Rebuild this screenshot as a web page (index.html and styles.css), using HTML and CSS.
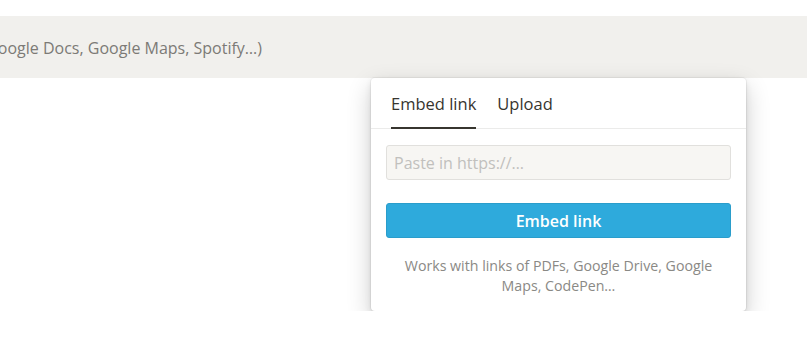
FILE: index.html
```html
<!DOCTYPE html>
<html lang="en">
<head>
  <meta charset="UTF-8" />
  <title>Embed block</title>
  <link rel="stylesheet" href="styles.css">
</head>
<body>

  <!-- bloc embed vide -->
  <div class="embed-block">
    <div class="embed-label">
      <span>Embed anything (Google Docs, Google Maps, Spotify…)</span>
    </div>
  </div>

  <!-- menu embed -->
  <div class="popup">
    <div class="tabs">
      <div class="tab active">Embed link</div>
      <div class="tab">Upload</div>
    </div>
    <div class="popup-body">
      <input class="url-input" type="text" placeholder="Paste in https://…">
      <button class="embed-btn">Embed link</button>
      <p class="hint">Works with links of PDFs, Google Drive, Google Maps, CodePen…</p>
    </div>
  </div>

</body>
</html>
```

FILE: styles.css
```css
html, body {
  margin: 0;
  padding: 0;
  background: #ffffff;
  font-family: "Segoe UI", "Open Sans", sans-serif;
  color: #37352f;
}

.embed-block {
  margin-top: 16px;
  height: 62px;
  background-color: #f1f0ed;
  display: flex;
  align-items: center;
}

.embed-label {
  width: 262px;
  overflow: hidden;
  display: flex;
  justify-content: flex-end;
  white-space: nowrap;
  font-size: 16px;
  color: #7c7a76;
  padding-top: 1px;
}

.popup {
  margin-left: 371px;
  width: 375px;
  background: #ffffff;
  border-radius: 4px;
  box-shadow: 0 0 0 1px rgba(15, 15, 15, 0.05),
              0 3px 6px rgba(15, 15, 15, 0.1),
              0 9px 24px rgba(15, 15, 15, 0.2);
}

.tabs {
  display: flex;
  gap: 21px;
  padding: 0 20px;
  border-bottom: 1px solid #ebebea;
}

.tab {
  font-size: 16.5px;
  padding: 14px 0 12px;
  border-bottom: 2px solid transparent;
  margin-bottom: -1px;
  color: #37352f;
}

.tab.active {
  border-bottom-color: #37352f;
}

.popup-body {
  padding: 16px 15px 15px;
  display: flex;
  flex-direction: column;
}

.url-input {
  height: 35px;
  box-sizing: border-box;
  border: 1px solid #e1e0dd;
  border-radius: 3px;
  background: #f7f6f3;
  padding: 0 7px;
  font-family: inherit;
  font-size: 16px;
  color: #37352f;
  outline: none;
}

.url-input::placeholder {
  color: #c1c0bd;
}

.embed-btn {
  margin-top: 23px;
  height: 35px;
  border: 1px solid #2a9dcb;
  border-radius: 3px;
  background: #2eaadc;
  color: #ffffff;
  font-family: inherit;
  font-size: 16px;
  font-weight: 600;
}

.hint {
  margin: 18px 10px 0;
  text-align: center;
  font-size: 14.2px;
  line-height: 20px;
  color: #8a8985;
}
```
